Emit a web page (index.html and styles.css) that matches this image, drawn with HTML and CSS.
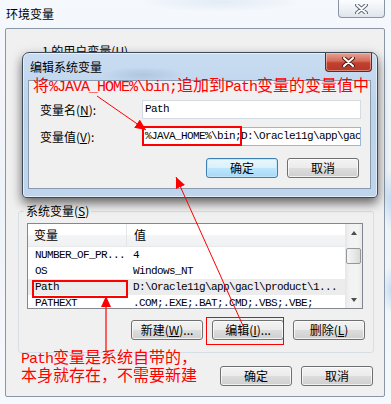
FILE: index.html
```html
<!DOCTYPE html>
<html lang="zh-CN">
<head>
    <meta charset="UTF-8">
    <meta name="viewport" content="width=device-width, initial-scale=1.0">
    <title>环境变量</title>
    <link rel="stylesheet" href="styles.css">
</head>
<body>
    <div class="window">
        <div class="titlebar">
            <span class="title">环境变量</span>
            <div class="close-btn">
                <svg width="13" height="10" viewBox="0 0 13 10">
                    <path d="M2 1 L11 9 M11 1 L2 9" stroke="#5f6b78" stroke-width="4" stroke-linecap="round"/>
                    <path d="M2 1 L11 9 M11 1 L2 9" stroke="#fff" stroke-width="2" stroke-linecap="round"/>
                </svg>
            </div>
        </div>

        <div class="client">
            <div class="user-vars">
                <span class="user-label">1 的用户变量(<u>U</u>)</span>
            </div>

            <fieldset class="group">
                <legend>系统变量(<u>S</u>)</legend>
                <div class="list">
                    <div class="list-body">
                        <div class="list-head">
                            <span class="col-name">变量</span>
                            <span class="col-val">值</span>
                        </div>
                        <div class="row">
                            <span class="col-name">NUMBER_OF_PR...</span>
                            <span class="col-val">4</span>
                        </div>
                        <div class="row">
                            <span class="col-name">OS</span>
                            <span class="col-val">Windows_NT</span>
                        </div>
                        <div class="row selected">
                            <span class="col-name">Path</span>
                            <span class="col-val">D:\Oracle11g\app\gacl\product\1...</span>
                        </div>
                        <div class="row">
                            <span class="col-name">PATHEXT</span>
                            <span class="col-val">.COM;.EXE;.BAT;.CMD;.VBS;.VBE;</span>
                        </div>
                    </div>
                    <div class="scrollbar">
                        <div class="sb-btn"><span class="tri-up"></span></div>
                        <div class="sb-thumb"></div>
                        <div class="sb-track"></div>
                        <div class="sb-btn"><span class="tri-down"></span></div>
                    </div>
                </div>
                <div class="btn-row group-btns">
                    <button class="btn">新建(<u>W</u>)...</button>
                    <button class="btn">编辑(<u>I</u>)...</button>
                    <button class="btn">删除(<u>L</u>)</button>
                </div>
            </fieldset>

            <div class="btn-row footer">
                <button class="btn">确定</button>
                <button class="btn">取消</button>
            </div>
        </div>

        <!-- edit dialog on top of the main window -->
        <div class="dialog">
            <div class="dialog-title">
                <span class="title">编辑系统变量</span>
                <div class="close-btn red">
                    <svg width="13" height="10" viewBox="0 0 13 10">
                        <path d="M2 1 L11 9 M11 1 L2 9" stroke="#4a1c16" stroke-width="4" stroke-linecap="round"/>
                        <path d="M2 1 L11 9 M11 1 L2 9" stroke="#fff" stroke-width="2" stroke-linecap="round"/>
                    </svg>
                </div>
            </div>
            <div class="dialog-client">
                <div class="field-grid">
                    <label>变量名(<u>N</u>):</label>
                    <div class="input">Path</div>
                    <label>变量值(<u>V</u>):</label>
                    <div class="input focus">%JAVA_HOME%\bin;D:\Oracle11g\app\gac</div>
                </div>
                <div class="btn-row dialog-btns">
                    <button class="btn default">确定</button>
                    <button class="btn">取消</button>
                </div>
            </div>
        </div>

        <!-- red annotations -->
        <div class="note note-top">将<span class="en">%JAVA_HOME%\bin;</span>追加到<span class="en">Path</span>变量的变量值中</div>
        <div class="mark mark-input"></div>
        <div class="mark mark-path"></div>
        <div class="mark mark-edit"></div>
        <div class="note note-bottom"><span class="en">Path</span>变量是系统自带的，<br>本身就存在，不需要新建</div>

        <svg class="arrows" width="391" height="404" viewBox="0 0 391 404">
            <defs>
                <marker id="head" markerUnits="userSpaceOnUse" markerWidth="11" markerHeight="10" refX="11" refY="5" orient="auto">
                    <path d="M0 0 L11 5 L0 10 Z" fill="#f00"/>
                </marker>
            </defs>
            <path d="M97 96 L146 130" stroke="#f00" stroke-width="1" fill="none" marker-end="url(#head)"/>
            <path d="M244 328 L176 177" stroke="#f00" stroke-width="1" fill="none" marker-end="url(#head)"/>
            <path d="M106 351 L106 296" stroke="#f00" stroke-width="1.2" fill="none" marker-end="url(#head)"/>
        </svg>
    </div>
</body>
</html>
```

FILE: styles.css
```css
* {
    box-sizing: border-box;
}

body {
    margin: 0;
    width: 391px;
    height: 404px;
    overflow: hidden;
    font-family: "Noto Sans CJK SC", "Liberation Sans", sans-serif;
    font-size: 12px;
    color: #000;
}

.window {
    position: relative;
    width: 391px;
    height: 404px;
    padding: 0 6px 0 5px;
    background:
        radial-gradient(ellipse 10px 30px at 391px 200px, #c3daf0, transparent),
        radial-gradient(ellipse 10px 24px at 391px 290px, #c9ddf1, transparent),
        radial-gradient(ellipse 80px 10px at 220px 2px, #e2ebf5, transparent),
        linear-gradient(180deg, #f5f8fc 0%, #eef3f9 50%, #f6f9fc 100%);
}

.titlebar {
    height: 28px;
    display: flex;
    justify-content: space-between;
    align-items: flex-start;
}

.titlebar .title {
    line-height: 28px;
    margin-left: 1px;
}

.close-btn {
    width: 47px;
    height: 18px;
    border: 1px solid #8795a5;
    border-top: none;
    border-radius: 0 0 4px 4px;
    background: linear-gradient(180deg, #fbfcfd 0%, #eef2f6 50%, #dfe5ec 100%);
    display: flex;
    align-items: center;
    justify-content: center;
}

.close-btn.red {
    height: 19px;
    margin-right: -1px;
    border-color: #5e2a24;
    background: linear-gradient(180deg, #e6a394 0%, #d46a58 45%, #c2402f 55%, #b3382a 100%);
    box-shadow: inset 0 0 0 1px rgba(255, 210, 200, 0.5);
}

.client {
    height: 369px;
    border: 1px solid #8896a5;
    border-radius: 2px;
    background: #f0f0f0;
}

.user-vars {
    height: 175px;
    padding: 15px 0 0 36px;
    line-height: 14px;
}

.group {
    margin: 0 10px 0 12px;
    padding: 5px 8px 12px;
    border: 1px solid #d5dfe5;
    border-radius: 3px;
    min-width: 0;
}

.group legend {
    padding: 0 2px;
    margin-left: -3px;
    line-height: 14px;
}

.list {
    display: flex;
    width: 336px;
    height: 86px;
    border: 1px solid #828790;
    background: #fff;
}

.list-body {
    flex: 1;
    overflow: hidden;
}

.list-head {
    display: flex;
    height: 23px;
    line-height: 22px;
    background: linear-gradient(180deg, #fff 0%, #fff 50%, #f4f5f7 50%, #f0f1f3 100%);
    border-bottom: 1px solid #e8e9eb;
}

.col-name {
    flex: none;
    width: 99px;
    padding-left: 6px;
    white-space: nowrap;
}

.list-head .col-name {
    border-right: 1px solid #e3e5e8;
}

.col-val {
    padding-left: 7px;
    white-space: nowrap;
}

.row {
    display: flex;
    height: 16px;
    line-height: 16px;
    font-family: "Liberation Mono", "Noto Sans CJK SC", monospace;
    font-size: 11px;
    letter-spacing: -0.6px;
}

.row .col-name {
    padding-left: 7px;
}

.row .col-val {
    padding-left: 6px;
}

.row.selected {
    background: #ececec;
}

.scrollbar {
    flex: none;
    width: 17px;
    display: flex;
    flex-direction: column;
    background: linear-gradient(90deg, #e6e6e6 0%, #f2f2f2 25%, #f4f4f4 75%, #e9e9e9 100%);
}

.sb-btn {
    height: 17px;
    display: flex;
    align-items: center;
    justify-content: center;
}

.tri-up,
.tri-down {
    width: 0;
    height: 0;
    border-left: 3.5px solid transparent;
    border-right: 3.5px solid transparent;
}

.tri-up {
    border-bottom: 4px solid #4d4d4d;
}

.tri-down {
    border-top: 4px solid #4d4d4d;
}

.sb-thumb {
    height: 16px;
    margin: 7px 1px 0;
    border: 1px solid #979797;
    border-radius: 2px;
    background: linear-gradient(90deg, #f6f6f6 0%, #e9e9e9 50%, #d9d9d9 100%);
}

.sb-track {
    flex: 1;
}

.btn-row {
    display: flex;
    justify-content: flex-end;
    gap: 9px;
}

.group-btns {
    margin-top: 11px;
}

.footer {
    margin-top: 13px;
    padding-right: 11px;
}

.btn {
    width: 72px;
    height: 20px;
    padding: 0;
    border: 1px solid #707070;
    border-radius: 3px;
    background: linear-gradient(180deg, #f3f3f3 0%, #ebebeb 50%, #dddddd 50%, #cfcfcf 100%);
    box-shadow: inset 0 0 0 1px rgba(255, 255, 255, 0.7);
    font-family: inherit;
    font-size: 12px;
    line-height: 18px;
    color: #000;
}

.btn.default {
    border-color: #3c7fb1;
    background: linear-gradient(180deg, #eaf6fd 0%, #d9f0fc 50%, #bee6fd 50%, #a7d9f5 100%);
    box-shadow: inset 0 0 0 1px rgba(190, 230, 253, 0.9);
}

/* edit dialog */
.dialog {
    position: absolute;
    left: 22px;
    top: 52px;
    width: 356px;
    height: 146px;
    padding: 0 6px 8px 5px;
    display: flex;
    flex-direction: column;
    border: 1px solid #3d4a58;
    border-radius: 7px 7px 4px 4px;
    background:
        radial-gradient(ellipse 40px 8px at 120px 22px, rgba(150, 175, 205, 0.45), transparent),
        linear-gradient(180deg, #c9dcf1 0%, #bcd3ec 40%, #bfd5ed 100%);
    box-shadow: 0 5px 11px rgba(0, 0, 0, 0.6), inset 0 0 0 1px rgba(255, 255, 255, 0.55);
}

.dialog-title {
    height: 27px;
    flex: none;
    display: flex;
    justify-content: space-between;
    align-items: flex-start;
}

.dialog-title .title {
    margin-left: 2px;
    line-height: 28px;
}

.dialog-client {
    flex: 1;
    border: 1px solid #8a9bb0;
    background: #f0f0f0;
    padding: 19px 9px 0 11px;
}

.field-grid {
    display: grid;
    grid-template-columns: 102px 1fr;
    row-gap: 8px;
    align-items: center;
}

.field-grid label {
    line-height: 19px;
}

.input {
    height: 19px;
    padding-left: 2px;
    border: 1px solid #d5dbe3;
    background: #fff;
    font-family: "Liberation Mono", monospace;
    font-size: 11px;
    letter-spacing: -0.6px;
    line-height: 17px;
    white-space: nowrap;
    overflow: hidden;
}

.input.focus {
    border-color: #93b8e2;
}

.dialog-btns {
    margin-top: 12px;
    padding-right: 2px;
}

/* annotations */
.note {
    position: absolute;
    color: #f00;
    font-family: "Liberation Mono", "Noto Sans CJK SC", monospace;
    font-size: 16px;
    line-height: 16px;
    white-space: nowrap;
}

.note .en {
    font-size: 15px;
    letter-spacing: -1px;
}

.note-top {
    left: 33px;
    top: 79px;
}

.note-bottom {
    left: 21px;
    top: 351px;
    line-height: 16.5px;
}

.mark {
    position: absolute;
    border: 2px solid #f00;
}

.mark-input {
    left: 142px;
    top: 126px;
    width: 100px;
    height: 20px;
}

.mark-path {
    left: 32px;
    top: 280px;
    width: 96px;
    height: 18px;
}

.mark-edit {
    left: 206px;
    top: 317px;
    width: 78px;
    height: 28px;
    border-width: 1px;
}

.arrows {
    position: absolute;
    left: 0;
    top: 0;
    pointer-events: none;
}
```
